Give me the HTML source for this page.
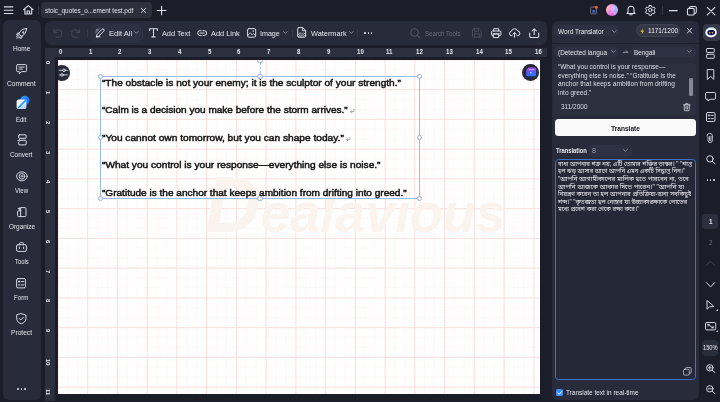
<!DOCTYPE html>
<html lang="en">
<head>
<meta charset="utf-8">
<title>stoic_quotes_o...ement test.pdf</title>
<style>
*{box-sizing:border-box;margin:0;padding:0}
html,body{width:720px;height:402px;overflow:hidden;background:#1b1d28;font-family:"Liberation Sans",sans-serif;}
#app{position:relative;width:720px;height:402px;overflow:hidden;background:#1b1d28;filter:blur(0.4px)}
.b{position:absolute}
.t{position:absolute;white-space:nowrap;line-height:1;transform-origin:0 0;display:block}
svg{position:absolute;overflow:visible}
svg.ic{fill:none;stroke:#dcdfe7;stroke-linecap:round;stroke-linejoin:round}
.q{color:#161616;-webkit-text-stroke:0.5px #161616}
.bn{font-family:"Liberation Sans","Noto Sans Bengali","Noto Sans Bengali UI","FreeSans","Unifont",sans-serif;color:#eceef3}
.wm::first-letter{font-size:80px}
.hd{width:5.2px;height:5.2px;border-radius:50%;border:0.9px solid #8fb0ee;background:#fff}
</style>
</head>
<body>
<div id="app">
<svg class="ic" style="left:4.40px;top:5.50px;" width="9.20" height="8.10" viewBox="0 0 9.20 8.10"><path d="M0.3 0.8h8.6M0.3 4.3h8.6M0.3 7.5h8.6" stroke-width="1.15"/></svg>
<svg class="ic" style="left:22.60px;top:5.40px;" width="10.60" height="9.60" viewBox="0 0 10.60 9.60"><path d="M0.6 4.6 5.3 0.6 10 4.600M1.900 3.800V9h6.800V3.800M4.100 9V6h2.400V9" stroke-width="1.15"/></svg>
<div class="b" style="left:37.60px;top:6.00px;width:0.90px;height:9.00px;background:#353846;border-radius:0px;"></div>
<div class="b" style="left:41.20px;top:2.40px;width:110.40px;height:15.80px;background:#2d303d;border-radius:4px;"></div>
<span class="t" style="left:45.30px;top:6px;font-size:7.6px;line-height:9px;color:#e4e6ec;transform:scaleX(0.8356);">stoic_quotes_o...ement test.pdf</span>
<svg class="ic" style="left:141.20px;top:8.00px;" width="5.00" height="4.80" viewBox="0 0 5.00 4.80"><path d="M0.3 0.2l4.400 4.400M4.700 0.200l-4.400 4.400" stroke-width="0.95"/></svg>
<svg class="ic" style="left:157.20px;top:5.60px;" width="9.20" height="9.00" viewBox="0 0 9.20 9.00"><path d="M4.600 0.200v8.600M0.200 4.500h8.800" stroke-width="1.15"/></svg>
<svg class="" style="left:590.00px;top:5.60px;" width="8.00" height="8.40" viewBox="0 0 8.00 8.40"><rect x="0.6" y="1" width="5.800" height="6.800" rx="0.8" fill="none" stroke="#777a88" stroke-width="0.9"/><rect x="2.300" y="4" width="2.800" height="2.600" fill="#3f63c8"/><circle cx="6.300" cy="1.300" r="1.500" fill="#ff5a36"/></svg>
<div class="b" style="left:606.3px;top:4.3px;width:12.2px;height:12.2px;border-radius:50%;background:radial-gradient(circle at 45% 105%,#e65ae0 0%,rgba(230,90,224,0) 60%),linear-gradient(95deg,#ffc3ae 0%,#f79aea 42%,#b4b4ff 75%,#84d4ff 100%)"></div>
<svg class="" style="left:609.90px;top:6.80px;" width="5.00" height="7.40" viewBox="0 0 5.00 7.40"><circle cx="2.500" cy="1.700" r="1.300" fill="none" stroke="#ffe0f5" stroke-width="0.6" opacity=".9"/><path d="M0.400 6.600c0-2.300 4.200-2.300 4.200 0" fill="none" stroke="#fff" stroke-width="0.6" opacity=".8"/></svg>
<svg class="ic" style="left:626.20px;top:5.30px;" width="10.00" height="10.10" viewBox="0 0 10.00 10.10"><path d="M2 7.300V4.300a3 3 0 0 1 6 0v3l1.100 1.300H0.900zM3.800 9.700h2.400" stroke-width="1.05"/></svg>
<svg class="ic" style="left:645.00px;top:5.30px;" width="10.60" height="10.00" viewBox="0 0 10.60 10.00"><circle cx="5.300" cy="5" r="1.700" stroke-width="1"/><path d="M4.300 0.500h2l.4 1.400 1 .6 1.400-.4 1 1.700-1 1 0 1.200 1 1-1 1.700-1.400-.4-1 .6-.4 1.400h-2l-.4-1.400-1-.6-1.400.4-1-1.700 1-1 0-1.200-1-1 1-1.700 1.400.4 1-.6z" stroke-width="1"/></svg>
<div class="b" style="left:661.80px;top:5.50px;width:0.90px;height:9.50px;background:#353846;border-radius:0px;"></div>
<svg class="ic" style="left:668.50px;top:9.50px;" width="8.50" height="1.20" viewBox="0 0 8.50 1.20"><path d="M0.300 0.600h8" stroke-width="1.1"/></svg>
<svg class="ic" style="left:687.00px;top:5.70px;" width="9.80" height="9.60" viewBox="0 0 9.80 9.60"><rect x="0.500" y="2.400" width="6.700" height="6.700" rx="1.200" stroke-width="1.050"/><path d="M2.600 2.300V1.700a1.200 1.200 0 0 1 1.200-1.200h4.300a1.200 1.200 0 0 1 1.200 1.200v4.300a1.200 1.200 0 0 1-1.200 1.200h-.8" stroke-width="1.050"/></svg>
<svg class="ic" style="left:706.50px;top:6.70px;" width="8.20" height="8.00" viewBox="0 0 8.20 8.00"><path d="M0.300 0.300l7.600 7.500M7.900 0.300l-7.600 7.500" stroke-width="1.150"/></svg>
<div class="b" style="left:3.00px;top:20.30px;width:37.60px;height:380.20px;background:#272b3a;border-radius:6px;"></div>
<span class="t" style="left:12.90px;top:44px;font-size:7.5px;line-height:9px;color:#e4e6ec;transform:scaleX(0.8693);">Home</span>
<span class="t" style="left:7.30px;top:79px;font-size:7.5px;line-height:9px;color:#e4e6ec;transform:scaleX(0.8796);">Comment</span>
<span class="t" style="left:16.40px;top:115px;font-size:7.5px;line-height:9px;color:#e4e6ec;transform:scaleX(0.8039);">Edit</span>
<span class="t" style="left:10.40px;top:150px;font-size:7.5px;line-height:9px;color:#e4e6ec;transform:scaleX(0.8528);">Convert</span>
<span class="t" style="left:15.10px;top:186px;font-size:7.5px;line-height:9px;color:#e4e6ec;transform:scaleX(0.8062);">View</span>
<span class="t" style="left:8.60px;top:222px;font-size:7.5px;line-height:9px;color:#e4e6ec;transform:scaleX(0.8542);">Organize</span>
<span class="t" style="left:14.80px;top:257px;font-size:7.5px;line-height:9px;color:#e4e6ec;transform:scaleX(0.7764);">Tools</span>
<span class="t" style="left:14.40px;top:293px;font-size:7.5px;line-height:9px;color:#e4e6ec;transform:scaleX(0.8229);">Form</span>
<span class="t" style="left:11.10px;top:328px;font-size:7.5px;line-height:9px;color:#e4e6ec;transform:scaleX(0.8836);">Protect</span>
<svg class="ic" style="left:16.00px;top:28.00px;" width="11.20" height="10.40" viewBox="0 0 11.20 10.40"><path d="M10.500 0.500c-3.600 0-6.300 1.900-7.800 5.300l2.600 2.600c3.400-1.500 5.200-4.300 5.200-7.900zM3.300 5.100 1.300 5.300 0.500 6.800l1.900.3M6 7.800l-.2 2-1.500.8-.3-1.900M7.300 3.800a.7.700 0 1 0 .01 0M2.400 8.400 0.700 10.100M1.500 7.500l-.9.900M3.300 9.300l-.9.900" stroke-width="1"/></svg>
<svg class="ic" style="left:16.00px;top:64.20px;" width="11.20" height="10.40" viewBox="0 0 11.20 10.40"><path d="M1.700 0.600h7.800a1.100 1.100 0 0 1 1.100 1.100v4.800a1.100 1.100 0 0 1-1.100 1.100H5.600L3.300 9.700V7.600H1.700A1.100 1.100 0 0 1 .6 6.500V1.700A1.100 1.100 0 0 1 1.700.6zM3 3.100h5.200M3 5.100h3.400" stroke-width="0.95"/></svg>
<svg class="" style="left:14.00px;top:94.00px;" width="18.00" height="18.00" viewBox="0 0 18.00 18.00"><defs><linearGradient id="eb" x1="0" y1="0" x2="1" y2="1"><stop offset="0" stop-color="#3b9bff"/><stop offset="1" stop-color="#0a66ee"/></linearGradient><linearGradient id="ew" x1="0" y1="0" x2="0.6" y2="1"><stop offset="0" stop-color="#ffffff"/><stop offset="0.55" stop-color="#eaf3ff"/><stop offset="1" stop-color="#a9d0ff"/></linearGradient></defs><circle cx="10.800" cy="6.500" r="4.700" fill="url(#eb)"/><rect x="2.600" y="5.600" width="9.800" height="9.500" rx="1.900" fill="url(#ew)"/><path d="M5.800 12.300l6.100-6.100" stroke="#23a4ff" stroke-width="1.700" stroke-linecap="round" fill="none"/><path d="M4.600 13.500l1.200-1.200" stroke="#1d7cf0" stroke-width="1.200" stroke-linecap="round" fill="none"/></svg>
<svg class="ic" style="left:16.60px;top:134.40px;" width="10.00" height="11.60" viewBox="0 0 10.00 11.60"><rect x="1.600" y="0.800" width="7.600" height="3.500" rx="1" stroke-width="1"/><path d="M4.200 6.300h4a1 1 0 0 1 1 1v2.600a1 1 0 0 1-1 1H2.600a1 1 0 0 1-1-1V8.600" stroke-width="1"/><path d="M0.600 6.400h2.600M2.300 5.300l1.100 1.100-1.100 1.100" stroke-width="0.850"/></svg>
<svg class="ic" style="left:15.60px;top:170.60px;" width="11.80" height="10.60" viewBox="0 0 11.80 10.60"><ellipse cx="5.900" cy="5.300" rx="5.300" ry="4.500" stroke-width="0.950"/><circle cx="5.900" cy="5.300" r="2.800" stroke-width="0.900"/><circle cx="5.900" cy="5.300" r="0.900" stroke-width="0.800"/></svg>
<svg class="ic" style="left:16.80px;top:206.60px;" width="9.60" height="10.20" viewBox="0 0 9.60 10.20"><path d="M4 0.600h4a1 1 0 0 1 1 1v7a1 1 0 0 1-1 1H4zM4 3.800H1.600a1 1 0 0 0-1 1v3.800a1 1 0 0 0 1 1H4M2.300 0.700v2M1.300 1.700h2" stroke-width="0.950"/></svg>
<svg class="ic" style="left:16.20px;top:242.40px;" width="11.00" height="10.00" viewBox="0 0 11.00 10.00"><rect x="0.600" y="2.700" width="9.800" height="6.700" rx="1.300" stroke-width="0.950"/><path d="M3.600 2.700V1.500a.9.900 0 0 1 .9-.9h2a.9.900 0 0 1 .9.900v1.200M3.400 5v1.600M7.600 5v1.600" stroke-width="0.950"/></svg>
<svg class="ic" style="left:16.40px;top:278.10px;" width="10.00" height="10.50" viewBox="0 0 10.00 10.50"><rect x="0.600" y="0.600" width="8.800" height="9.300" rx="1.300" stroke-width="0.950"/><path d="M2.400 3.600h1.400M5.300 3.600h2.400M2.400 6.900h1.400M5.300 6.900h2.400M3.100 2.900v1.400" stroke-width="0.950"/></svg>
<svg class="ic" style="left:16.20px;top:313.20px;" width="10.60" height="11.40" viewBox="0 0 10.60 11.40"><path d="M5.300 0.600 9.900 2.200v3.500c0 2.400-1.800 4.100-4.600 5.100C2.500 9.800.7 8.100.7 5.700V2.200zM3.300 5.500l1.500 1.500 2.700-2.800" stroke-width="0.950"/></svg>
<div class="b" style="left:17.45px;top:387.800px;width:1.900px;height:1.900px;border-radius:50%;background:#e0e3ea"></div>
<div class="b" style="left:20.55px;top:387.800px;width:1.900px;height:1.900px;border-radius:50%;background:#e0e3ea"></div>
<div class="b" style="left:23.65px;top:387.800px;width:1.900px;height:1.900px;border-radius:50%;background:#e0e3ea"></div>
<div class="b" style="left:45.00px;top:21.20px;width:502.00px;height:24.20px;background:#272b3a;border-radius:6px;"></div>
<svg class="ic" style="left:53.00px;top:28.00px;stroke:#424555" width="9.40" height="10.20" viewBox="0 0 9.40 10.20"><path d="M0.800 1.400v3.200h3.200M0.900 4.500C2 2.500 3.800 1.700 5.500 1.900c2 .3 3.300 1.900 3.300 3.700 0 2-1.600 3.700-3.800 3.700H2.600" stroke-width="1.100"/></svg>
<svg class="ic" style="left:71.00px;top:28.00px;stroke:#424555" width="9.40" height="10.20" viewBox="0 0 9.40 10.20"><path d="M8.600 1.400v3.200H5.400M8.500 4.500C7.400 2.500 5.600 1.700 3.900 1.900c-2 .3-3.300 1.900-3.300 3.700 0 2 1.600 3.700 3.800 3.700h2.400" stroke-width="1.100"/></svg>
<div class="b" style="left:86.70px;top:28.50px;width:0.80px;height:9.00px;background:#353846;border-radius:0px;"></div>
<div class="b" style="left:90.50px;top:24.00px;width:50.00px;height:19.00px;background:#2c3040;border-radius:4px;"></div>
<svg class="ic" style="left:94.80px;top:27.80px;" width="9.60" height="9.80" viewBox="0 0 9.60 9.80"><path d="M0.600 2.600a2 2 0 0 1 2-2h2.800L0.600 5.400z" fill="#6d7182" stroke="none"/><path d="M1.400 8.800l.6-2.500L7 1.300a1.250 1.250 0 0 1 1.800 1.800L3.800 8.100zM1.400 8.800H5" stroke-width="1"/></svg>
<span class="t" style="left:108.80px;top:29px;font-size:8.1px;line-height:9px;color:#e8eaf0;transform:scaleX(0.9333);">Edit All</span>
<svg class="ic" style="left:133.80px;top:31.40px;stroke:#9497a5" width="4.60" height="3.20" viewBox="0 0 4.60 3.20"><path d="M0.400 0.500l1.900 1.900 1.900-1.900" stroke-width="0.9"/></svg>
<div class="b" style="left:142.20px;top:28.50px;width:0.80px;height:9.00px;background:#353846;border-radius:0px;"></div>
<svg class="ic" style="left:148.60px;top:27.80px;" width="9.00" height="9.60" viewBox="0 0 9.00 9.60"><path d="M0.600 2.600V0.700h7.800v1.900M4.500 0.700v8.200M2.900 8.900h3.200" stroke-width="1.050"/></svg>
<span class="t" style="left:161.90px;top:29px;font-size:8.1px;line-height:9px;color:#e8eaf0;transform:scaleX(0.9024);">Add Text</span>
<svg class="ic" style="left:196.70px;top:29.60px;" width="10.40" height="6.20" viewBox="0 0 10.40 6.20"><path d="M4.300 0.700H3.100a2.400 2.400 0 0 0 0 4.800h1.200M6.100 0.700h1.200a2.400 2.400 0 0 1 0 4.800H6.100M3.200 3.100h4" stroke-width="1"/></svg>
<span class="t" style="left:211.00px;top:29px;font-size:8.1px;line-height:9px;color:#e8eaf0;transform:scaleX(0.9111);">Add Link</span>
<svg class="ic" style="left:246.60px;top:27.80px;" width="9.30" height="9.80" viewBox="0 0 9.30 9.80"><rect x="0.600" y="0.600" width="8.100" height="8.600" rx="1.300" stroke-width="1"/><path d="M0.800 7.300 3.300 5l1.900 1.700 1.300-1.100 2 1.900" stroke-width="0.9"/><circle cx="6.200" cy="3" r="0.800" fill="#dcdfe7" stroke="none"/></svg>
<span class="t" style="left:260.20px;top:29px;font-size:8.1px;line-height:9px;color:#e8eaf0;transform:scaleX(0.8800);">Image</span>
<svg class="ic" style="left:282.60px;top:31.40px;stroke:#9497a5" width="4.60" height="3.20" viewBox="0 0 4.60 3.20"><path d="M0.400 0.500l1.900 1.900 1.900-1.900" stroke-width="0.9"/></svg>
<div class="b" style="left:291.60px;top:28.50px;width:0.80px;height:9.00px;background:#353846;border-radius:0px;"></div>
<svg class="ic" style="left:297.00px;top:27.20px;" width="9.30" height="10.80" viewBox="0 0 9.30 10.80"><path d="M1.700 0.600h4.100l2.900 2.900v5.700a1 1 0 0 1-1 1H1.700a1 1 0 0 1-1-1V1.600a1 1 0 0 1 1-1zM5.600 0.700v3h3" stroke-width="0.950"/><path d="M1.400 9.600l3-3.600M3 9.800l3.400-4M4.800 9.800l3.300-3.900M6.600 9.800l1.800-2.100M1 8l2.200-2.600" stroke-width="0.700"/></svg>
<span class="t" style="left:310.60px;top:29px;font-size:8.1px;line-height:9px;color:#e8eaf0;transform:scaleX(0.9088);">Watermark</span>
<svg class="ic" style="left:349.20px;top:31.40px;stroke:#9497a5" width="4.60" height="3.20" viewBox="0 0 4.60 3.20"><path d="M0.400 0.500l1.900 1.900 1.900-1.900" stroke-width="0.9"/></svg>
<div class="b" style="left:357.40px;top:28.50px;width:0.80px;height:9.00px;background:#353846;border-radius:0px;"></div>
<div class="b" style="left:364.40px;top:32.200px;width:1.600px;height:1.600px;border-radius:50%;background:#dcdfe7"></div>
<div class="b" style="left:367.60px;top:32.200px;width:1.600px;height:1.600px;border-radius:50%;background:#dcdfe7"></div>
<div class="b" style="left:370.80px;top:32.200px;width:1.600px;height:1.600px;border-radius:50%;background:#dcdfe7"></div>
<svg class="ic" style="left:410.40px;top:27.80px;stroke:#555868" width="10.40" height="10.40" viewBox="0 0 10.40 10.40"><circle cx="4.500" cy="4.500" r="3.700" stroke-width="1.050"/><path d="M7.300 7.300l2.600 2.600" stroke-width="1.050"/></svg>
<span class="t" style="left:425.00px;top:29px;font-size:7.4px;line-height:9px;color:#6a6d7c;transform:scaleX(0.8288);">Search Tools</span>
<svg class="ic" style="left:471.70px;top:27.80px;stroke:#4a4d5c" width="9.80" height="9.80" viewBox="0 0 9.80 9.80"><path d="M1.600 0.600h5.700l1.900 1.900v5.700a1 1 0 0 1-1 1H1.600a1 1 0 0 1-1-1V1.600a1 1 0 0 1 1-1zM2.700 0.700v2.600h4V0.700M2.400 9.100V5.800h5v3.300" stroke-width="0.950"/></svg>
<svg class="ic" style="left:490.50px;top:27.80px;" width="10.40" height="10.40" viewBox="0 0 10.40 10.40"><path d="M2.700 3V0.700h5V3M2.500 7.600H1.500a1 1 0 0 1-1-1V4a1 1 0 0 1 1-1h7.400a1 1 0 0 1 1 1v2.600a1 1 0 0 1-1 1H7.900M2.700 5.900h5v3.700h-5zM2 5.900h6.400" stroke-width="1"/></svg>
<svg class="ic" style="left:509.20px;top:28.40px;" width="11.00" height="9.60" viewBox="0 0 11.00 9.60"><path d="M3.100 7.700H2.800a2.200 2.200 0 0 1-.3-4.400A3.100 3.100 0 0 1 8.500 2.900a2.400 2.400 0 0 1-.1 4.800H7.900M5.500 9.300V4.600M3.800 6.200l1.700-1.700 1.700 1.700" stroke-width="1"/></svg>
<svg class="ic" style="left:528.60px;top:27.60px;" width="10.40" height="10.40" viewBox="0 0 10.40 10.40"><path d="M0.700 5v3.300a1.200 1.200 0 0 0 1.200 1.200h6.600a1.200 1.200 0 0 0 1.200-1.200V5M5.200 6.600V0.900M3 3l2.200-2.200L7.400 3" stroke-width="1.050"/></svg>
<div class="b" style="left:44.50px;top:48.00px;width:502.50px;height:8.60px;background:#2b2f3e;border-radius:0px;"></div>
<div class="b" style="left:44.50px;top:48.00px;width:10.60px;height:353.00px;background:#2b2f3e;border-radius:0px;"></div>
<span class="t" style="left:58.75px;top:48px;font-size:6.4px;line-height:7px;color:#e9ebf0;font-weight:bold;transform:scaleX(0.9500);">0</span>
<span class="t" style="left:88.53px;top:48px;font-size:6.4px;line-height:7px;color:#e9ebf0;font-weight:bold;transform:scaleX(0.9500);">1</span>
<span class="t" style="left:118.31px;top:48px;font-size:6.4px;line-height:7px;color:#e9ebf0;font-weight:bold;transform:scaleX(0.9500);">2</span>
<span class="t" style="left:148.09px;top:48px;font-size:6.4px;line-height:7px;color:#e9ebf0;font-weight:bold;transform:scaleX(0.9500);">3</span>
<span class="t" style="left:177.87px;top:48px;font-size:6.4px;line-height:7px;color:#e9ebf0;font-weight:bold;transform:scaleX(0.9500);">4</span>
<span class="t" style="left:207.65px;top:48px;font-size:6.4px;line-height:7px;color:#e9ebf0;font-weight:bold;transform:scaleX(0.9500);">5</span>
<span class="t" style="left:237.43px;top:48px;font-size:6.4px;line-height:7px;color:#e9ebf0;font-weight:bold;transform:scaleX(0.9500);">6</span>
<span class="t" style="left:267.21px;top:48px;font-size:6.4px;line-height:7px;color:#e9ebf0;font-weight:bold;transform:scaleX(0.9500);">7</span>
<span class="t" style="left:296.99px;top:48px;font-size:6.4px;line-height:7px;color:#e9ebf0;font-weight:bold;transform:scaleX(0.9500);">8</span>
<span class="t" style="left:326.77px;top:48px;font-size:6.4px;line-height:7px;color:#e9ebf0;font-weight:bold;transform:scaleX(0.9500);">9</span>
<span class="t" style="left:356.55px;top:48px;font-size:6.4px;line-height:7px;color:#e9ebf0;font-weight:bold;transform:scaleX(0.9500);">10</span>
<span class="t" style="left:386.33px;top:48px;font-size:6.4px;line-height:7px;color:#e9ebf0;font-weight:bold;transform:scaleX(0.9500);">11</span>
<span class="t" style="left:416.11px;top:48px;font-size:6.4px;line-height:7px;color:#e9ebf0;font-weight:bold;transform:scaleX(0.9500);">12</span>
<span class="t" style="left:445.89px;top:48px;font-size:6.4px;line-height:7px;color:#e9ebf0;font-weight:bold;transform:scaleX(0.9500);">13</span>
<span class="t" style="left:475.67px;top:48px;font-size:6.4px;line-height:7px;color:#e9ebf0;font-weight:bold;transform:scaleX(0.9500);">14</span>
<span class="t" style="left:505.45px;top:48px;font-size:6.4px;line-height:7px;color:#e9ebf0;font-weight:bold;transform:scaleX(0.9500);">15</span>
<span class="t" style="left:535.23px;top:48px;font-size:6.4px;line-height:7px;color:#e9ebf0;font-weight:bold;transform:scaleX(0.9500);">16</span>
<span class="t" style="left:52.400px;top:61.40px;font-size:6.1px;line-height:7px;font-weight:bold;color:#dfe1e8;transform-origin:0 0;transform:rotate(90deg) scaleX(0.95)">0</span>
<span class="t" style="left:52.400px;top:91.15px;font-size:6.1px;line-height:7px;font-weight:bold;color:#dfe1e8;transform-origin:0 0;transform:rotate(90deg) scaleX(0.95)">1</span>
<span class="t" style="left:52.400px;top:120.90px;font-size:6.1px;line-height:7px;font-weight:bold;color:#dfe1e8;transform-origin:0 0;transform:rotate(90deg) scaleX(0.95)">2</span>
<span class="t" style="left:52.400px;top:150.65px;font-size:6.1px;line-height:7px;font-weight:bold;color:#dfe1e8;transform-origin:0 0;transform:rotate(90deg) scaleX(0.95)">3</span>
<span class="t" style="left:52.400px;top:180.40px;font-size:6.1px;line-height:7px;font-weight:bold;color:#dfe1e8;transform-origin:0 0;transform:rotate(90deg) scaleX(0.95)">4</span>
<span class="t" style="left:52.400px;top:210.15px;font-size:6.1px;line-height:7px;font-weight:bold;color:#dfe1e8;transform-origin:0 0;transform:rotate(90deg) scaleX(0.95)">5</span>
<span class="t" style="left:52.400px;top:239.90px;font-size:6.1px;line-height:7px;font-weight:bold;color:#dfe1e8;transform-origin:0 0;transform:rotate(90deg) scaleX(0.95)">6</span>
<span class="t" style="left:52.400px;top:269.65px;font-size:6.1px;line-height:7px;font-weight:bold;color:#dfe1e8;transform-origin:0 0;transform:rotate(90deg) scaleX(0.95)">7</span>
<span class="t" style="left:52.400px;top:299.40px;font-size:6.1px;line-height:7px;font-weight:bold;color:#dfe1e8;transform-origin:0 0;transform:rotate(90deg) scaleX(0.95)">8</span>
<span class="t" style="left:52.400px;top:329.15px;font-size:6.1px;line-height:7px;font-weight:bold;color:#dfe1e8;transform-origin:0 0;transform:rotate(90deg) scaleX(0.95)">9</span>
<span class="t" style="left:52.400px;top:358.90px;font-size:6.1px;line-height:7px;font-weight:bold;color:#dfe1e8;transform-origin:0 0;transform:rotate(90deg) scaleX(0.95)">10</span>
<span class="t" style="left:52.400px;top:388.65px;font-size:6.1px;line-height:7px;font-weight:bold;color:#dfe1e8;transform-origin:0 0;transform:rotate(90deg) scaleX(0.95)">11</span>
<div class="b" id="page" style="left:57.6px;top:60.2px;width:482.10px;height:333.60px;background-color:#fff;overflow:hidden;
background-image:linear-gradient(to right,#fbdfdf 0,#fbdfdf 0.8px,transparent 0.8px),linear-gradient(to bottom,#fbdfdf 0,#fbdfdf 0.8px,transparent 0.8px),linear-gradient(to right,#fff8f8 0,#fff8f8 0.8px,transparent 0.8px),linear-gradient(to bottom,#fff8f8 0,#fff8f8 0.8px,transparent 0.8px);
background-size:29.76px 29.76px,29.76px 29.76px,9.920px 9.920px,9.920px 9.920px;background-position:-0.6px -0.6px"></div>
<span class="t wm" style="left:205px;top:160px;font-size:56px;line-height:90px;font-weight:bold;font-style:italic;color:#fbf4ee;transform:scaleX(0.96)">Dealavious</span>
<div class="b" style="left:100px;top:75.700px;width:319.80px;height:123.50px;border:0.9px solid #9db9f2"></div>
<div class="b" style="left:259.600px;top:62px;width:0;height:12px;border-left:0.9px dashed #a9c3f5"></div>
<span class="t q" style="left:101.90px;top:77px;font-size:9.8px;line-height:11px;color:#161616;transform:scaleX(1.0318);">“The obstacle is not your enemy; it is the sculptor of your strength.”</span>
<span class="t q" style="left:101.90px;top:104px;font-size:9.8px;line-height:11px;color:#161616;transform:scaleX(1.0232);">“Calm is a decision you make before the storm arrives.”</span>
<svg class="ic" style="left:349.60px;top:109.30px;stroke:#8a8a8a" width="4.40" height="4.10" viewBox="0 0 4.40 4.10"><path d="M4 0.300v2.400H0.700M1.900 1.500 0.600 2.700l1.300 1.200" stroke-width="0.700"/></svg>
<span class="t q" style="left:101.90px;top:132px;font-size:9.8px;line-height:11px;color:#161616;transform:scaleX(1.0374);">“You cannot own tomorrow, but you can shape today.”</span>
<svg class="ic" style="left:345.70px;top:136.80px;stroke:#8a8a8a" width="4.40" height="4.10" viewBox="0 0 4.40 4.10"><path d="M4 0.300v2.400H0.700M1.900 1.500 0.600 2.700l1.300 1.200" stroke-width="0.700"/></svg>
<span class="t q" style="left:101.90px;top:159px;font-size:9.8px;line-height:11px;color:#161616;transform:scaleX(1.0353);">“What you control is your response—everything else is noise.”</span>
<span class="t q" style="left:101.90px;top:187px;font-size:9.8px;line-height:11px;color:#161616;transform:scaleX(1.0263);">“Gratitude is the anchor that keeps ambition from drifting into greed.”</span>
<div class="b hd" style="left:97.80px;top:73.50px"></div>
<div class="b hd" style="left:257.40px;top:73.50px"></div>
<div class="b hd" style="left:416.80px;top:73.50px"></div>
<div class="b hd" style="left:97.80px;top:134.90px"></div>
<div class="b hd" style="left:416.80px;top:134.90px"></div>
<div class="b hd" style="left:97.80px;top:196.20px"></div>
<div class="b hd" style="left:257.40px;top:196.20px"></div>
<div class="b hd" style="left:416.80px;top:196.20px"></div>
<div class="b hd" style="left:257.40px;top:57.70px"></div>
<div class="b" style="left:200.00px;top:56.60px;width:120.00px;height:3.60px;background:#1b1d28;border-radius:0px;"></div>
<div class="b" style="left:57.6px;top:64px;width:14px;height:18px;overflow:hidden"><div class="b" style="left:-3.60px;top:0.500px;width:16px;height:16px;border-radius:8px;background:#262937"></div></div>
<svg class="ic" style="left:58.50px;top:68.20px;" width="8.50" height="9.20" viewBox="0 0 8.50 9.20"><path d="M0.300 2.300h3.400M6.300 2.300h2M0.300 6.900h1.400M4.300 6.900h4" stroke-width="0.9"/><circle cx="5" cy="2.300" r="1.300" stroke-width="0.9"/><circle cx="3" cy="6.900" r="1.300" stroke-width="0.9"/></svg>
<div class="b" style="left:522px;top:64.400px;width:16.700px;height:16.700px;border-radius:50%;background:#262937"></div>
<svg class="" style="left:525.60px;top:67.40px;" width="10.60" height="10.40" viewBox="0 0 10.60 10.40"><defs><linearGradient id="fg" x1="0" y1="0" x2="0.300" y2="1"><stop offset="0" stop-color="#d455e6"/><stop offset="0.450" stop-color="#6a4cf5"/><stop offset="1" stop-color="#2474ff"/></linearGradient></defs><path d="M2.300 0.600h6.600a1.300 1.300 0 0 1 1.300 1.300v6a1.300 1.300 0 0 1-1.300 1.300H1.500A1.300 1.300 0 0 1 .2 7.900V3.200z" fill="url(#fg)"/><path d="M3 2.800h5.400" stroke="#ffd0f5" stroke-width="0.800" fill="none"/><rect x="4.200" y="5" width="1.300" height="1.300" fill="#cfe6ff"/></svg>
<div class="b" style="left:551.70px;top:20.60px;width:147.60px;height:379.80px;background:#272b3a;border-radius:6px;"></div>
<div class="b" style="left:551.70px;top:42.50px;width:147.60px;height:1.00px;background:#1f212d;border-radius:0px;"></div>
<div class="b" style="left:554.40px;top:25.20px;width:65.00px;height:11.20px;background:#2d3141;border-radius:4px;"></div>
<span class="t" style="left:557.90px;top:27px;font-size:7.3px;line-height:9px;color:#e4e6ec;transform:scaleX(0.8806);">Word Translator</span>
<svg class="ic" style="left:611.70px;top:29.80px;stroke:#9497a5" width="4.60" height="3.20" viewBox="0 0 4.60 3.20"><path d="M0.400 0.500l1.900 1.900 1.900-1.900" stroke-width="0.85"/></svg>
<div class="b" style="left:635.60px;top:24.20px;width:44.70px;height:13.20px;background:#343745;border-radius:7px;border:0.7px solid #3f4251"></div>
<svg class="" style="left:640.00px;top:27.80px;" width="4.60" height="6.60" viewBox="0 0 4.60 6.60"><path d="M2.900 0.200 0.500 3.700h1.700L1.500 6.400 4.100 2.700H2.400z" fill="#f7c51e" stroke="none"/></svg>
<span class="t" style="left:647.80px;top:26px;font-size:7.3px;line-height:9px;color:#e8eaf0;transform:scaleX(0.8895);">1171/1200</span>
<svg class="ic" style="left:687.00px;top:28.30px;" width="5.00" height="5.40" viewBox="0 0 5.00 5.40"><path d="M0.300 0.300l4.400 4.800M4.700 0.300l-4.400 4.800" stroke-width="0.950"/></svg>
<div class="b" style="left:554.40px;top:47.20px;width:63.20px;height:9.80px;background:#2d3141;border-radius:4px;"></div>
<span class="t" style="left:557.90px;top:48px;font-size:7.3px;line-height:9px;color:#e4e6ec;transform:scaleX(0.8816);">(Detected langua</span>
<svg class="ic" style="left:610.80px;top:50.40px;stroke:#9497a5" width="4.60" height="3.20" viewBox="0 0 4.60 3.20"><path d="M0.400 0.500l1.900 1.900 1.900-1.900" stroke-width="0.85"/></svg>
<svg class="ic" style="left:622.80px;top:49.50px;stroke:#b4b7c3" width="5.00" height="3.50" viewBox="0 0 5.00 3.50"><path d="M0.300 2.300h4.300M3 0.600l1.700 1.700" stroke-width="0.750"/></svg>
<div class="b" style="left:630.60px;top:47.20px;width:65.70px;height:9.80px;background:#2d3141;border-radius:4px;"></div>
<span class="t" style="left:634.00px;top:48px;font-size:7.3px;line-height:9px;color:#e4e6ec;transform:scaleX(0.8750);">Bengali</span>
<svg class="ic" style="left:687.30px;top:50.40px;stroke:#9497a5" width="4.60" height="3.20" viewBox="0 0 4.60 3.20"><path d="M0.400 0.500l1.900 1.900 1.900-1.900" stroke-width="0.85"/></svg>
<div class="b" style="left:554.40px;top:62.50px;width:141.90px;height:52.30px;background:#2b2f3e;border-radius:4px;"></div>
<span class="t" style="left:558.10px;top:63px;font-size:7.1px;line-height:8px;color:#dcdfe7;transform:scaleX(0.9211);">“What you control is your response—</span>
<span class="t" style="left:558.10px;top:72px;font-size:7.1px;line-height:8px;color:#dcdfe7;transform:scaleX(0.9033);">everything else is noise.” “Gratitude is the</span>
<span class="t" style="left:558.10px;top:80px;font-size:7.1px;line-height:8px;color:#dcdfe7;transform:scaleX(0.9381);">anchor that keeps ambition from drifting</span>
<span class="t" style="left:558.10px;top:89px;font-size:7.1px;line-height:8px;color:#dcdfe7;transform:scaleX(0.9250);">into greed.”</span>
<div class="b" style="left:689.40px;top:77.80px;width:3.30px;height:18.70px;background:#868995;border-radius:1.5px;"></div>
<span class="t" style="left:561.00px;top:103px;font-size:7.1px;line-height:8px;color:#dcdfe7;transform:scaleX(0.9118);">311/2000</span>
<svg class="ic" style="left:682.80px;top:102.60px;" width="7.60" height="8.10" viewBox="0 0 7.60 8.10"><path d="M0.500 1.900h6.600M2.700 1.800V0.700h2.200v1.100M1.300 2v4.900a.8.800 0 0 0 .8.800h3.400a.8.800 0 0 0 .8-.8V2M3 3.600v2.500M4.600 3.600v2.500" stroke-width="0.800"/></svg>
<div class="b" style="left:555.30px;top:119.10px;width:140.30px;height:16.70px;background:#fafafa;border-radius:3.5px;"></div>
<span class="t" style="left:611.00px;top:124px;font-size:7.7px;line-height:9px;color:#14151b;font-weight:bold;transform:scaleX(0.8589);">Translate</span>
<span class="t" style="left:556.00px;top:147px;font-size:7.1px;line-height:8px;color:#e8eaf0;font-weight:bold;transform:scaleX(0.8165);">Translation</span>
<div class="b" style="left:588.80px;top:144.80px;width:43.20px;height:11.80px;background:#2d3141;border-radius:4px;"></div>
<span class="t" style="left:591.60px;top:147px;font-size:7px;line-height:7px;color:#9a9daa;transform:scaleX(1.0240);">8</span>
<svg class="ic" style="left:623.00px;top:149.40px;stroke:#9497a5" width="4.60" height="3.20" viewBox="0 0 4.60 3.20"><path d="M0.400 0.500l1.900 1.900 1.900-1.900" stroke-width="0.85"/></svg>
<div class="b" style="left:555.4px;top:158.6px;width:140.200px;height:221.500px;border:1.5px solid #3b73ca;border-radius:3.500px;background:#252836"></div>
<div class="b" style="left:557px;top:160px;width:137.500px;height:60px;overflow:hidden">
<span class="t bn" style="left:1.300px;top:-1.10px;font-size:7.0px;line-height:10px;max-width:158.19px;overflow:hidden;transform:scaleX(0.8528)">বাধা আপনার শত্রু নয়; এটি তোমার শক্তির ভাস্কর। " "শান্ত</span>
<span class="t bn" style="left:1.300px;top:6.47px;font-size:7.0px;line-height:10px;max-width:151.57px;overflow:hidden;transform:scaleX(0.8419)">হল ঝড় আসার আগে আপনি এমন একটি সিদ্ধান্ত নিন।"</span>
<span class="t bn" style="left:1.300px;top:14.04px;font-size:7.0px;line-height:10px;max-width:145.55px;overflow:hidden;transform:scaleX(0.9017)">"আপনি আগামীকালের মালিক হতে পারবেন না, তবে</span>
<span class="t bn" style="left:1.300px;top:21.61px;font-size:7.0px;line-height:10px;max-width:137.66px;overflow:hidden;transform:scaleX(0.9200)">আপনি আজকে আকার দিতে পারেন।" "আপনি যা</span>
<span class="t bn" style="left:1.300px;top:29.18px;font-size:7.0px;line-height:10px;max-width:151.99px;overflow:hidden;transform:scaleX(0.8812)">নিয়ন্ত্রণ করেন তা হল আপনার প্রতিক্রিয়া-অন্য সবকিছুই</span>
<span class="t bn" style="left:1.300px;top:36.75px;font-size:7.0px;line-height:10px;max-width:149.24px;overflow:hidden;transform:scaleX(0.8692)">শব্দ।" "কৃতজ্ঞতা হল নোঙ্গর যা উচ্চাকাঙ্ক্ষাকে লোভের</span>
<span class="t bn" style="left:1.300px;top:44.32px;font-size:7.0px;line-height:10px;max-width:96.18px;overflow:hidden;transform:scaleX(0.8506)">মধ্যে প্রবেশ করা থেকে রক্ষা করে।"</span>
</div>
<svg class="ic" style="left:682.80px;top:367.20px;stroke:#b9bcc8" width="8.70" height="8.60" viewBox="0 0 8.70 8.60"><rect x="0.500" y="2.300" width="5.800" height="5.800" rx="1.100" stroke-width="0.850"/><path d="M2.500 2.200V1.600a1.100 1.100 0 0 1 1.100-1.100h3.500a1.100 1.100 0 0 1 1.100 1.100v3.500a1.100 1.100 0 0 1-1.100 1.100h-.7" stroke-width="0.850"/></svg>
<div class="b" style="left:555.60px;top:388.80px;width:7.50px;height:7.50px;background:#3a8bff;border-radius:1.5px;"></div>
<svg class="ic" style="left:555.60px;top:388.80px;stroke:#fff" width="7.50" height="7.50" viewBox="0 0 7.50 7.50"><path d="M1.700 3.900l1.500 1.500 2.600-3" stroke-width="1" stroke="#fff"/></svg>
<span class="t" style="left:566.00px;top:389px;font-size:7.1px;line-height:8px;color:#e4e6ec;transform:scaleX(0.9087);">Translate text in real-time</span>
<div class="b" style="left:703.20px;top:24.00px;width:17.80px;height:16.80px;background:#353846;border-radius:4px;"></div>
<svg class="" style="left:704.50px;top:27.00px;" width="12.20" height="11.00" viewBox="0 0 12.20 11.00"><defs><linearGradient id="rg" x1="0" y1="0" x2="1" y2="1"><stop offset="0" stop-color="#6aa8ff"/><stop offset="0.5" stop-color="#ffffff"/><stop offset="1" stop-color="#c58bff"/></linearGradient></defs><ellipse cx="6.100" cy="5.400" rx="5.900" ry="5.100" fill="url(#rg)"/><ellipse cx="6.100" cy="5.400" rx="5.100" ry="4.300" fill="#ffffff"/><ellipse cx="6.100" cy="5.600" rx="3.900" ry="2.800" fill="#3b4cf0"/><ellipse cx="6.300" cy="5.600" rx="3.500" ry="2.500" fill="#15163a"/><circle cx="4.800" cy="5.700" r="0.700" fill="#ffd84a"/><circle cx="7.400" cy="5.700" r="0.700" fill="#ffd84a"/></svg>
<svg class="ic" style="left:706.20px;top:48.40px;" width="8.80" height="10.80" viewBox="0 0 8.80 10.80"><rect x="0.500" y="0.500" width="7.800" height="4" rx="0.800" stroke-width="0.950"/><rect x="0.500" y="6.300" width="7.800" height="4" rx="0.800" stroke-width="0.950"/></svg>
<svg class="ic" style="left:706.60px;top:69.30px;" width="7.40" height="10.90" viewBox="0 0 7.40 10.90"><path d="M0.600 0.600h6.200v9.700L3.700 7.400.6 10.300z" stroke-width="0.950"/></svg>
<svg class="ic" style="left:705.00px;top:91.60px;" width="11.20" height="9.40" viewBox="0 0 11.20 9.40"><path d="M1.600 0.500h8a1 1 0 0 1 1 1v4.800a1 1 0 0 1-1 1H5.200L3 9.100V7.300H1.600a1 1 0 0 1-1-1V1.500a1 1 0 0 1 1-1z" stroke-width="0.950"/></svg>
<svg class="ic" style="left:705.70px;top:111.50px;" width="9.50" height="10.00" viewBox="0 0 9.50 10.00"><rect x="0.500" y="0.500" width="8.500" height="9" rx="1.300" stroke-width="0.950"/><path d="M2.300 3.400h1.300M5 3.400h2.300M2.300 6.600h1.300M5 6.600h2.300M2.950 2.750v1.300" stroke-width="0.900"/></svg>
<svg class="ic" style="left:706.20px;top:132.50px;stroke:#c9ccd6" width="8.30" height="10.00" viewBox="0 0 8.30 10.00"><path d="M2 3.800v3.600a2.200 2.200 0 0 0 4.400 0V3a2.700 2.700 0 0 0-5.400 0M3.500 3.600v3.600a.75.750 0 0 0 1.500 0V3.400" stroke-width="0.900"/></svg>
<svg class="ic" style="left:705.70px;top:154.80px;" width="9.60" height="9.20" viewBox="0 0 9.60 9.20"><circle cx="3.900" cy="3.900" r="3.200" stroke-width="0.950"/><path d="M6.300 6.300l2.700 2.500" stroke-width="0.950"/></svg>
<div class="b" style="left:706.60px;top:179.200px;width:1.600px;height:1.600px;border-radius:50%;background:#dcdfe7"></div>
<div class="b" style="left:709.80px;top:179.200px;width:1.600px;height:1.600px;border-radius:50%;background:#dcdfe7"></div>
<div class="b" style="left:713.00px;top:179.200px;width:1.600px;height:1.600px;border-radius:50%;background:#dcdfe7"></div>
<div class="b" style="left:702.40px;top:213.50px;width:15.20px;height:15.20px;background:#2c2f3d;border-radius:3.5px;"></div>
<span class="t" style="left:708.66px;top:218px;font-size:6.6px;line-height:7px;color:#e8eaf0;font-weight:bold;transform:scaleX(0.9500);">1</span>
<span class="t" style="left:708.66px;top:239px;font-size:6.6px;line-height:7px;color:#70737f;transform:scaleX(0.9500);">2</span>
<svg class="ic" style="left:705.90px;top:260.20px;stroke:#454857" width="9.20" height="6.00" viewBox="0 0 9.20 6.00"><path d="M0.600 5.200l4-4.200 4 4.200" stroke-width="1"/></svg>
<svg class="ic" style="left:705.90px;top:282.20px;" width="9.20" height="5.80" viewBox="0 0 9.20 5.80"><path d="M0.600 0.700l4 4.200 4-4.200" stroke-width="1"/></svg>
<svg class="ic" style="left:706.20px;top:299.80px;" width="9.00" height="11.00" viewBox="0 0 9.00 11.00"><path d="M1 0.800v8.400l2.700-2.400 3.900-.2z" stroke-width="0.950"/></svg>
<div class="b" style="left:715.600px;top:308.800px;width:0;height:0;border-left:2.200px solid transparent;border-bottom:2.200px solid #c9ccd6"></div>
<svg class="ic" style="left:705.00px;top:322.10px;" width="11.20" height="8.40" viewBox="0 0 11.20 8.40"><rect x="0.500" y="0.500" width="10.200" height="7.400" rx="1.300" stroke-width="0.950"/><path d="M3 2.600l5.200 3.200M3 2.600h1.700M3 2.600v1.500M8.200 5.800H6.500M8.200 5.800V4.300" stroke-width="0.800"/></svg>
<div class="b" style="left:715.800px;top:329.600px;width:0;height:0;border-left:2.200px solid transparent;border-bottom:2.200px solid #c9ccd6"></div>
<div class="b" style="left:702.40px;top:339.80px;width:15.80px;height:16.00px;background:#2a2d3a;border-radius:3.5px;"></div>
<span class="t" style="left:702.90px;top:344px;font-size:6.3px;line-height:7px;color:#e4e6ec;transform:scaleX(0.9063);">150%</span>
<svg class="ic" style="left:705.80px;top:364.40px;" width="9.40" height="8.80" viewBox="0 0 9.40 8.80"><circle cx="3.800" cy="3.800" r="3.200" stroke-width="0.950"/><path d="M6.200 6.200l2.700 2.300M2.300 3.800h3M3.800 2.300v3" stroke-width="0.950"/></svg>
<svg class="ic" style="left:705.80px;top:385.00px;" width="9.40" height="9.20" viewBox="0 0 9.40 9.20"><circle cx="3.800" cy="3.800" r="3.200" stroke-width="0.950"/><path d="M6.200 6.200l2.700 2.600M2.300 3.800h3" stroke-width="0.950"/></svg>
</div>
</body>
</html>
